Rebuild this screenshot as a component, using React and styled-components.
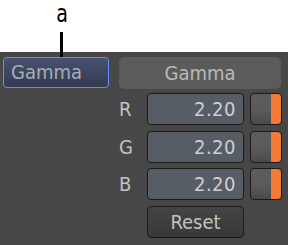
import React from "react";
import styled, { createGlobalStyle } from "styled-components";

const GlobalStyle = createGlobalStyle`
  html, body {
    margin: 0;
    padding: 0;
    background: #ffffff;
  }
  body {
    font-family: "DejaVu Sans Condensed", "DejaVu Sans", sans-serif;
  }
`;

const channels = ["R", "G", "B"];

const App = () => {
  return (
    <StPage>
      <GlobalStyle />
      <StCallout>
        <StCalloutLetter>a</StCalloutLetter>
        <StLeader />
      </StCallout>
      <StPanel>
        <StLeftCol>
          <StModeButton>Gamma</StModeButton>
        </StLeftCol>
        <StRightCol>
          <StHeader>Gamma</StHeader>
          {channels.map((c) => (
            <StRow key={c}>
              <StLabel>{c}</StLabel>
              <StField>2.20</StField>
              <StSwatch />
            </StRow>
          ))}
          <StRow>
            <StLabel />
            <StResetBtn>Reset</StResetBtn>
          </StRow>
        </StRightCol>
      </StPanel>
    </StPage>
  );
};

const StPage = styled.div`
  width: 288px;
  height: 245px;
  position: relative;
  overflow: hidden;
`;

const StCallout = styled.div`
  height: 52px;
  position: relative;
`;

const StCalloutLetter = styled.div`
  position: absolute;
  left: 52px;
  top: 1px;
  width: 20px;
  text-align: center;
  font-size: 25px;
  line-height: 25px;
  color: #000;
  transform: scaleX(0.85);
`;

const StLeader = styled.div`
  position: absolute;
  left: 60px;
  top: 32px;
  width: 3px;
  height: 25px;
  background: #000;
  z-index: 2;
`;

const StPanel = styled.div`
  height: 193px;
  background: #474747;
  display: flex;
  box-sizing: border-box;
  padding: 5px 0 0 3px;
`;

const StLeftCol = styled.div`
  width: 116px;
`;

const StModeButton = styled.div`
  width: 106px;
  height: 31px;
  box-sizing: border-box;
  border: 1px solid #6a8cf0;
  border-radius: 4px;
  background: linear-gradient(#46526c, #333b52);
  color: #a9adb6;
  font-size: 20px;
  line-height: 29px;
  padding-left: 7px;
`;

const StRightCol = styled.div`
  width: 163px;
  display: flex;
  flex-direction: column;
  gap: 5.5px;
`;

const StHeader = styled.div`
  width: 162px;
  height: 32px;
  margin-bottom: -1.5px;
  border-radius: 5px;
  background: #5b5b5b;
  color: #b9b9b9;
  font-size: 20px;
  line-height: 32px;
  text-align: center;
`;

const StRow = styled.div`
  display: flex;
  align-items: center;
  height: 32px;
`;

const StLabel = styled.div`
  width: 28px;
  color: #c4c4c4;
  font-size: 20px;
`;

const StField = styled.div`
  width: 97px;
  height: 32px;
  box-sizing: border-box;
  border: 1px solid #1a1a1a;
  border-radius: 4px;
  background: #565d64;
  color: #cfcfcf;
  font-size: 20px;
  line-height: 30px;
  text-align: right;
  padding-right: 7px;
  letter-spacing: 0.5px;
`;

const StSwatch = styled.div`
  width: 32px;
  height: 32px;
  margin-left: 6px;
  box-sizing: border-box;
  border: 1px solid #1a1a1a;
  border-radius: 4px;
  background: linear-gradient(to right, transparent 20px, #f37b35 20px, #f37b35 30px),
    linear-gradient(#5d5d5d 0%, #5a5a5a 55%, #4a4a4a 100%);
`;

const StResetBtn = styled.div`
  width: 97px;
  height: 32px;
  box-sizing: border-box;
  border: 1px solid #1a1a1a;
  border-radius: 4px;
  background: linear-gradient(#444444, #383838);
  color: #c2c2c2;
  font-size: 20px;
  line-height: 30px;
  text-align: center;
`;

export default App;
